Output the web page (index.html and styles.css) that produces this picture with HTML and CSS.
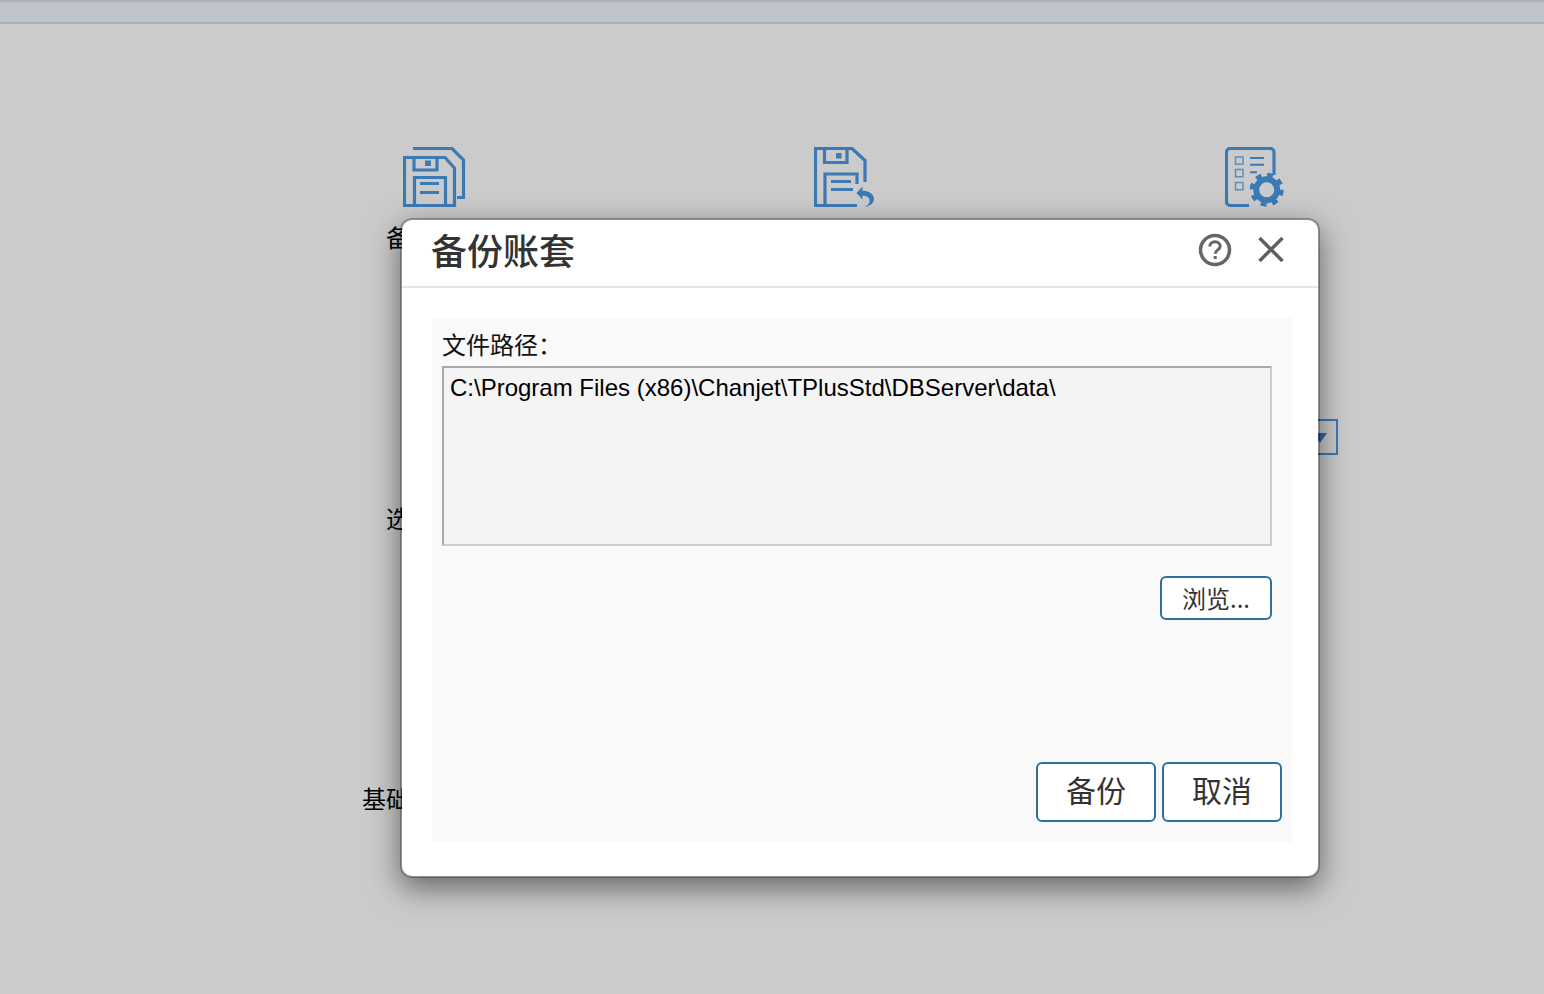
FILE: index.html
```html
<!DOCTYPE html>
<html lang="zh-CN">
<head>
<meta charset="utf-8">
<title>备份账套</title>
<link rel="stylesheet" href="styles.css">
</head>
<body>
<header class="topbar"></header>
<main class="page">
  <section class="tiles">
    <div class="tile">
      <svg class="tile-icon" width="64" height="62" viewBox="0 0 64 62" fill="none">
        <path d="M10 1.5H49L60.5 13V50.5H54" class="ic"/>
        <path d="M1.5 10.5H42L51.5 21V58.5H1.5Z" class="ic"/>
        <path d="M11 11V23H34V11" class="ic"/>
        <rect x="22" y="13.5" width="6" height="5.5" class="ic-fill"/>
        <path d="M11.5 58V30.5H42.5V58" class="ic"/>
        <path d="M17 36.5H36M17 45.5H36" class="ic"/>
      </svg>
      <span class="tile-label">备份账套</span>
    </div>
    <div class="tile">
      <svg class="tile-icon" width="64" height="62" viewBox="0 0 64 62" fill="none">
        <path d="M51 35V13.5L38 1.5H1.5V58.5H43" class="ic"/>
        <path d="M10.5 2V15.5H33V2" class="ic"/>
        <rect x="22" y="6" width="5.5" height="5.5" class="ic-fill"/>
        <path d="M11 58V27H43V37" class="ic"/>
        <path d="M17 34.5H37M17 42.5H39" class="ic"/>
        <path d="M42.5 46L48.5 39.5V43.8C55 43.5 60 47.5 60 52C60 56 56 59.5 50.5 60C54 58.5 56 56 55.5 53C55 50 52 48.8 48.5 48.8V52.5Z" class="ic-fill"/>
      </svg>
    </div>
    <div class="tile">
      <svg class="tile-icon" width="64" height="62" viewBox="0 0 64 62" fill="none">
        <path d="M24 58.5H5A3.5 3.5 0 0 1 1.5 55V5A3.5 3.5 0 0 1 5 1.5H45.500A3.500 3.500 0 0 1 49 5V28" class="ic"/>
        <path d="M10.500 10H18V17.200H10.500ZM10.500 22.500H18V29.700H10.500ZM10.500 35.500H18V42.700H10.500Z" class="ic-thin"/>
        <path d="M25 11H39M25 17.700H39M25 25.300H32" class="ic-mid"/>
        <circle cx="41.700" cy="42.700" r="10.500" class="gear-ring"/>
        <circle cx="41.700" cy="42.700" r="14.500" class="gear-teeth"/>
      </svg>
    </div>
  </section>
  <div class="select-row">
    <div class="select-box"><span class="select-arrow"></span></div>
  </div>
  <p class="row-label row-label-a">选择账套</p>
  <p class="row-label row-label-b">基础数据</p>
</main>

<div class="modal">
  <div class="modal-head">
    <h1 class="modal-title">备份账套</h1>
    <button class="head-btn" type="button" aria-label="帮助">
      <svg width="34" height="34" viewBox="0 0 34 34" fill="none">
        <circle cx="17" cy="17" r="14.500" class="hb"/>
        <path d="M11.800 13.600C11.800 10.600 14 8.800 17 8.800C20 8.800 22.200 10.700 22.200 13.300C22.200 16.800 17.200 17 17.200 20.800" class="hb-thin"/>
        <rect x="15.700" y="23" width="3" height="3" class="hb-dot"/>
      </svg>
    </button>
    <button class="head-btn head-close" type="button" aria-label="关闭">
      <svg width="28" height="28" viewBox="0 0 28 28" fill="none">
        <path d="M2.500 2L25.500 25M25.500 2L2.500 25" class="hb-x"/>
      </svg>
    </button>
  </div>
  <div class="modal-panel">
    <label class="field-label">文件路径：</label>
    <textarea class="path-input" readonly>C:\Program Files (x86)\Chanjet\TPlusStd\DBServer\data\</textarea>
    <div class="browse-row"><button class="btn btn-small" type="button">浏览...</button></div>
    <div class="foot-row">
      <button class="btn btn-large" type="button">备份</button>
      <button class="btn btn-large" type="button">取消</button>
    </div>
  </div>
</div>
</body>
</html>
```
FILE: styles.css
```css
* { box-sizing: border-box; }
html, body { margin: 0; height: 100%; }
body {
  background: #cbcbcb;
  overflow: hidden;
  font-family: "Liberation Sans", "Noto Sans CJK SC", sans-serif;
  color: #000;
}
.topbar {
  height: 24px;
  background: #bfc4ca;
  border-top: 2px solid #aeb1b7;
  border-bottom: 2px solid #aeaeae;
}
.page { display: flex; flex-direction: column; padding-top: 123px; }

.tiles { display: flex; gap: 315px; padding-left: 386px; height: 109px; }
.tile { width: 96px; display: flex; flex-direction: column; align-items: center; }
.tile-icon { display: block; margin-left: 1px; flex: none; }
.tile-label { font-size: 24px; line-height: 34px; margin-top: 13px; white-space: nowrap; }

.ic { stroke: #3c7ab5; stroke-width: 3.2; }
.ic-thin { stroke: #5b8fc0; stroke-width: 1.5; }
.ic-mid { stroke: #3c7ab5; stroke-width: 2; }
.ic-fill { fill: #3c7ab5; }
.gear-ring { stroke: #3c7ab5; stroke-width: 6; }
.gear-teeth { stroke: #3c7ab5; stroke-width: 5; stroke-dasharray: 5.700 5.690; }

.select-row { display: flex; justify-content: flex-end; padding-right: 206px; margin-top: 163px; }
.select-box {
  width: 40px;
  height: 36px;
  border: 2px solid #3c7ab5;
  display: flex;
  align-items: center;
  padding-left: 13px;
}
.select-arrow {
  width: 0;
  height: 0;
  border-left: 7px solid transparent;
  border-right: 7px solid transparent;
  border-top: 10px solid #2f689f;
  margin-top: 2px;
}
.row-label { margin: 0; font-size: 24px; line-height: 34px; white-space: nowrap; }
.row-label-a { padding-left: 386px; margin-top: 48px; }
.row-label-b { padding-left: 362px; margin-top: 246px; }

.modal {
  position: absolute;
  left: 400px;
  top: 218px;
  width: 920px;
  height: 660px;
  display: flex;
  flex-direction: column;
  background: #fff;
  background-clip: padding-box;
  border: 2px solid rgba(0, 0, 0, .28);
  border-radius: 12px;
  box-shadow: 0 10px 30px rgba(0, 0, 0, .5);
}
.modal-head {
  height: 68px;
  flex: none;
  display: flex;
  align-items: center;
  padding: 0 33px 6px 29px;
  border-bottom: 2px solid #e5e5e5;
}
.modal-title {
  margin: -2px auto 0 0;
  font-size: 36px;
  line-height: 50px;
  font-weight: 500;
  color: #333;
  font-family: "Noto Sans CJK SC", sans-serif;
}
.head-btn { padding: 0; border: 0; background: none; display: flex; }
.head-close { margin-left: 25px; }
.hb { stroke: #666; stroke-width: 3.500; }
.hb-thin { stroke: #666; stroke-width: 3; }
.hb-dot { fill: #666; }
.hb-x { stroke: #5f5f5f; stroke-width: 3.500; }

.modal-panel {
  flex: 1;
  margin: 30px 26px 34px 30px;
  padding: 12px 10px 20px;
  background: #f9f9f9;
  display: flex;
  flex-direction: column;
}
.field-label {
  font-size: 24px;
  line-height: 28px;
  height: 36px;
  font-family: "Noto Sans CJK SC", sans-serif;
  color: #111;
}
.path-input {
  display: block;
  width: 830px;
  height: 180px;
  flex: none;
  margin: 0;
  padding: 5px 6px;
  resize: none;
  outline: 0;
  background: #f4f4f4;
  border: 2px solid;
  border-color: #a9a9a9 #cdcdcd #cdcdcd #a9a9a9;
  font-family: "Liberation Sans", sans-serif;
  font-size: 24px;
  line-height: 30px;
  color: #000;
}
.browse-row { display: flex; justify-content: flex-end; margin-top: 30px; padding-right: 10px; }
.foot-row { display: flex; justify-content: flex-end; gap: 6px; margin-top: auto; }
.btn {
  background: #fff;
  border: 2px solid #2e6f9e;
  border-radius: 6px;
  color: #333;
  padding: 0;
  font-family: "Noto Sans CJK SC", sans-serif;
}
.btn-small { width: 112px; height: 44px; font-size: 24px; padding-bottom: 1px; }
.btn-large { width: 120px; height: 60px; font-size: 30px; padding-bottom: 6px; }
```
